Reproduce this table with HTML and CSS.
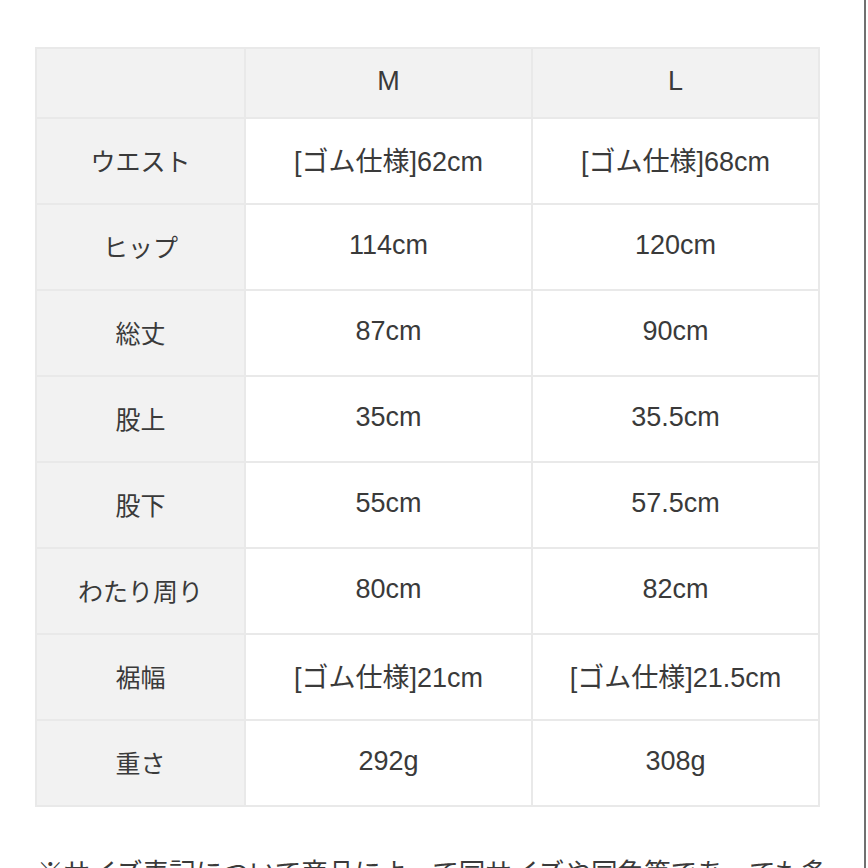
FILE: index.html
```html
<!DOCTYPE html>
<html lang="ja">
<head>
<meta charset="utf-8">
<link rel="stylesheet" href="styles.css">
</head>
<body>
<div class="page">
  <table class="size-table">
    <colgroup>
      <col class="c-label"><col class="c-size"><col class="c-size">
    </colgroup>
    <thead>
      <tr><th class="label"></th><th>M</th><th>L</th></tr>
    </thead>
    <tbody>
      <tr><th class="label">ウエスト</th><td>[ゴム仕様]62cm</td><td>[ゴム仕様]68cm</td></tr>
      <tr><th class="label">ヒップ</th><td>114cm</td><td>120cm</td></tr>
      <tr><th class="label">総丈</th><td>87cm</td><td>90cm</td></tr>
      <tr><th class="label">股上</th><td>35cm</td><td>35.5cm</td></tr>
      <tr><th class="label">股下</th><td>55cm</td><td>57.5cm</td></tr>
      <tr><th class="label">わたり周り</th><td>80cm</td><td>82cm</td></tr>
      <tr><th class="label">裾幅</th><td>[ゴム仕様]21cm</td><td>[ゴム仕様]21.5cm</td></tr>
      <tr><th class="label">重さ</th><td>292g</td><td>308g</td></tr>
    </tbody>
  </table>
  <p class="note">※サイズ表記について商品によって同サイズや同色等であっても多少の誤差がございます。</p>
</div>
</body>
</html>
```
FILE: styles.css
```css
html, body {
  margin: 0;
  padding: 0;
  background: #fff;
}
.page {
  width: 866px;
  height: 868px;
  overflow: hidden;
  border-right: 2px solid #707070;
  padding-top: 47px;
  box-sizing: border-box;
  font-family: "Liberation Sans", "Noto Sans CJK JP", sans-serif;
  color: #3a3a3a;
}
.size-table {
  margin-left: 35px;
  width: 783px;
  border-collapse: collapse;
  table-layout: fixed;
}
.c-label { width: 209px; }
.c-size { width: 287px; }
.size-table th,
.size-table td {
  border: 2px solid #e9e9e9;
  text-align: center;
  vertical-align: middle;
  font-weight: normal;
  font-size: 27px;
  padding: 0 0 3px;
  height: 86px;
  box-sizing: border-box;
}
.size-table thead th {
  background: #f2f2f2;
  height: 70px;
}
.size-table th.label {
  background: #f2f2f2;
  font-size: 25px;
}
.size-table td {
  background: #fff;
}
.note {
  margin: 48px 0 0 37px;
  width: 800px;
  font-size: 26.6px;
  line-height: 36px;
}
```
